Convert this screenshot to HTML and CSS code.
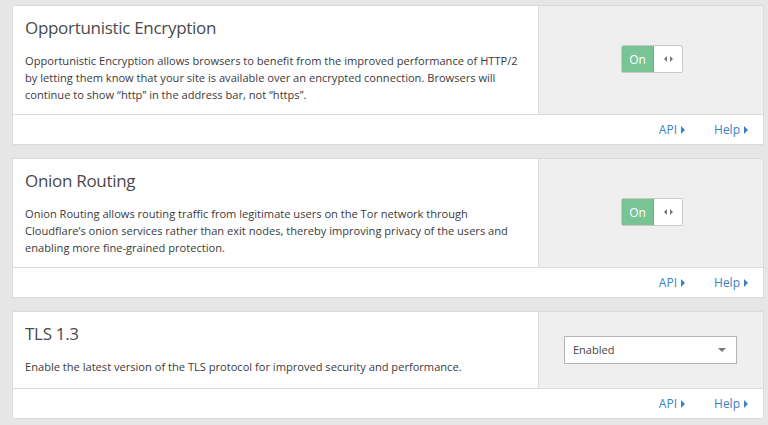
FILE: index.html
```html
<!DOCTYPE html>
<html>
<head>
<meta charset="utf-8">
<link rel="stylesheet" href="styles.css">
</head>
<body>
<div class="page">
  <section class="card">
    <div class="card-main tall">
      <div class="card-body">
        <h2 class="card-title">Opportunistic Encryption</h2>
        <p class="card-text">Opportunistic Encryption allows browsers to benefit from the improved performance of HTTP/2 by letting them know that your site is available over an encrypted connection. Browsers will continue to show “http” in the address bar, not “https”.</p>
      </div>
      <div class="card-control">
        <div class="toggle">
          <span class="toggle-on">On</span>
          <span class="toggle-handle"><span class="tri-l"></span><span class="tri-r"></span></span>
        </div>
      </div>
    </div>
    <div class="card-footer">
      <a class="link">API<span class="caret"></span></a>
      <a class="link">Help<span class="caret"></span></a>
    </div>
  </section>

  <section class="card">
    <div class="card-main tall">
      <div class="card-body">
        <h2 class="card-title">Onion Routing</h2>
        <p class="card-text">Onion Routing allows routing traffic from legitimate users on the Tor network through Cloudflare’s onion services rather than exit nodes, thereby improving privacy of the users and enabling more fine-grained protection.</p>
      </div>
      <div class="card-control">
        <div class="toggle">
          <span class="toggle-on">On</span>
          <span class="toggle-handle"><span class="tri-l"></span><span class="tri-r"></span></span>
        </div>
      </div>
    </div>
    <div class="card-footer">
      <a class="link">API<span class="caret"></span></a>
      <a class="link">Help<span class="caret"></span></a>
    </div>
  </section>

  <section class="card">
    <div class="card-main short">
      <div class="card-body">
        <h2 class="card-title">TLS 1.3</h2>
        <p class="card-text">Enable the latest version of the TLS protocol for improved security and performance.</p>
      </div>
      <div class="card-control">
        <div class="select">
          <span class="select-value">Enabled</span>
          <span class="select-caret"></span>
        </div>
      </div>
    </div>
    <div class="card-footer">
      <a class="link">API<span class="caret"></span></a>
      <a class="link">Help<span class="caret"></span></a>
    </div>
  </section>
</div>
</body>
</html>
```

FILE: styles.css
```css
* { box-sizing: border-box; }
html, body {
  margin: 0;
  padding: 0;
  background: #e6e6e6;
  font-family: "Open Sans", "Noto Sans", sans-serif;
  color: #333;
}
.page {
  padding: 5px 4px 0 12px;
  display: flex;
  flex-direction: column;
  gap: 13px;
}
.card {
  background: #fff;
  border: 1px solid #dadada;
  border-radius: 2px;
}
.card-main {
  display: flex;
  border-bottom: 1px solid #dcdcdc;
}
.card-main.tall { height: 109px; }
.card-main.short { height: 77px; }
.card-body {
  width: 525px;
  padding: 10px 14px 0 12px;
}
.card-title {
  margin: 0;
  font-size: 17px;
  font-weight: 400;
  line-height: 24px;
  color: #4a4a4a;
  letter-spacing: -0.3px;
}
.card-text {
  margin: 13px 0 0;
  font-size: 11.1px;
  line-height: 16.8px;
  color: #3a3a3a;
}
.card-control {
  flex: 1;
  background: #efefef;
  border-left: 1px solid #dcdcdc;
  display: flex;
  align-items: center;
  justify-content: center;
}
.toggle {
  display: flex;
  width: 62px;
  height: 28px;
  margin-left: 2px;
  margin-top: -2px;
  border: 1px solid #c9c9c9;
  border-radius: 2px;
  background: #fff;
  overflow: hidden;
}
.toggle-on {
  width: 32px;
  background: #79c494;
  border-right: 1px solid #62b07f;
  color: #fff;
  font-size: 12px;
  display: flex;
  align-items: center;
  justify-content: center;
}
.toggle-handle {
  flex: 1;
  display: flex;
  align-items: center;
  justify-content: center;
  gap: 3px;
}
.tri-l, .tri-r {
  width: 0;
  height: 0;
  border-top: 3px solid transparent;
  border-bottom: 3px solid transparent;
}
.tri-l { border-right: 3px solid #777; }
.tri-r { border-left: 3px solid #777; }
.select {
  width: 173px;
  height: 28px;
  border: 1px solid #b4b4b4;
  background: #fff;
  display: flex;
  align-items: center;
  justify-content: space-between;
  padding: 0 10px 0 8px;
  margin-right: 1px;
  margin-top: -1px;
}
.select-value {
  font-size: 11px;
  color: #444;
}
.select-caret {
  width: 0;
  height: 0;
  border-left: 4px solid transparent;
  border-right: 4px solid transparent;
  border-top: 4px solid #777;
}
.card-footer {
  height: 29px;
  display: flex;
  align-items: center;
  justify-content: flex-end;
  gap: 29px;
  padding-right: 15px;
}
.link {
  font-size: 12px;
  color: #3a82c2;
  display: flex;
  align-items: center;
  gap: 4px;
}
.caret {
  width: 0;
  height: 0;
  border-top: 4px solid transparent;
  border-bottom: 4px solid transparent;
  border-left: 4px solid #3a82c2;
}
```
